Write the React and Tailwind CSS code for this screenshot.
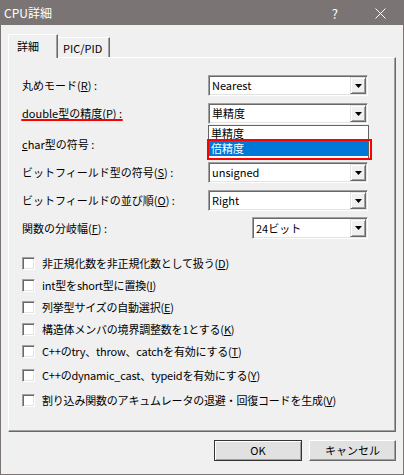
import React from "react";

function Combo({ value, className = "w-[160px]" }) {
  return (
    <div
      className={`flex h-[21px] bg-white border border-t-[#a0a0a0] border-l-[#a0a0a0] border-r-white border-b-white shadow-[inset_1px_1px_0_#696969,inset_-1px_-1px_0_#e3e3e3] ${className}`}
    >
      <div className="flex-1 flex items-center pl-[3px] text-[11px] leading-none text-black">{value}</div>
      <div className="w-[16px] my-[1px] mr-[1px] bg-[#f0f0f0] border border-t-[#e3e3e3] border-l-[#e3e3e3] border-r-[#696969] border-b-[#696969] shadow-[inset_1px_1px_0_#ffffff,inset_-1px_-1px_0_#a0a0a0] flex items-center justify-center">
        <svg width="7" height="4" viewBox="0 0 7 4">
          <path d="M0 0h7L3.5 4z" fill="#000" />
        </svg>
      </div>
    </div>
  );
}

function Row({ label, children, className = "" }) {
  return (
    <div className={`flex items-center h-[21px] ${className}`}>
      <div className="w-[186px] text-[11px] leading-none text-black">{label}</div>
      {children}
    </div>
  );
}

function Check({ children, className = "" }) {
  return (
    <div className={`flex items-center h-[16px] ${className}`}>
      <div className="w-[13px] h-[13px] bg-white border border-t-[#a0a0a0] border-l-[#a0a0a0] border-r-white border-b-white shadow-[inset_1px_1px_0_#696969,inset_-1px_-1px_0_#e3e3e3]" />
      <span className="ml-[7px] text-[11px] leading-none text-black tracking-[-0.2px]">{children}</span>
    </div>
  );
}

export default function App() {
  return (
    <div className="w-[404px] h-[475px] bg-[#f0f0f0] border border-[#7a7574] flex flex-col font-['Noto_Sans_CJK_JP',sans-serif] select-none">
      {/* タイトルバー */}
      <div className="h-[24px] bg-[#7a7574] flex items-center text-white text-[12px] leading-none">
        <span className="pl-[3px]">CPU詳細</span>
        <span className="ml-auto mr-[37px] text-[13px]">?</span>
        <svg width="11" height="11" viewBox="0 0 11 11" className="mr-[17px]">
          <path d="M0.5 0.5l10 10M10.5 0.5l-10 10" stroke="#fff" strokeWidth="1" />
        </svg>
      </div>

      {/* タブ */}
      <div className="flex items-end h-[23px] mt-[9px] ml-[7px]">
        <div className="relative z-10 h-[24px] w-[50px] -mb-px bg-[#f0f0f0] border-t border-l border-white border-r border-r-[#696969] shadow-[inset_-1px_0_0_#a0a0a0] pl-[8px] pt-[6px] text-[11px] leading-none text-black">
          詳細
        </div>
        <div className="h-[20px] w-[52px] bg-[#f0f0f0] border-t border-white border-r border-r-[#696969] shadow-[inset_-1px_0_0_#a0a0a0] pl-[5px] pt-[5px] text-[11px] leading-none text-black">
          PIC/PID
        </div>
      </div>

      {/* パネル */}
      <div className="relative ml-[7px] w-[388px] h-[375px] border border-t-white border-l-white border-r-[#696969] border-b-[#696969] shadow-[inset_-1px_-1px_0_#a0a0a0] pl-[13px] pt-[17px]">
        <Row label={<>丸めモード(<u>R</u>) :</>}>
          <Combo value="Nearest" />
        </Row>
        <Row className="mt-[7px]" label={<span className="relative">double型の精度(P) :<span className="absolute -left-px -right-px top-[14px] h-[2px] bg-[#ff0000] rounded-full" /></span>}>
          <Combo value="単精度" />
        </Row>
        <Row className="mt-[10px]" label={<><u>c</u>har型の符号 :</>}>
          <Combo value="" />
        </Row>
        <Row className="mt-[7px]" label={<>ビットフィールド型の符号(<u>S</u>) :</>}>
          <Combo value="unsigned" />
        </Row>
        <Row className="mt-[7px]" label={<>ビットフィールドの並び順(<u>O</u>) :</>}>
          <Combo value="Right" />
        </Row>
        <Row className="mt-[6px] h-[22px]" label={<>関数の分岐幅(<u>F</u>) :</>}>
          <Combo value="24ビット" className="w-[116px] ml-[44px] h-[22px]" />
        </Row>

        <Check className="mt-[16px]">非正規化数を非正規化数として扱う(<u>D</u>)</Check>
        <Check className="mt-[6px]">int型をshort型に置換(<u>I</u>)</Check>
        <Check className="mt-[6px]">列挙型サイズの自動選択(<u>E</u>)</Check>
        <Check className="mt-[6px]">構造体メンバの境界調整数を1とする(<u>K</u>)</Check>
        <Check className="mt-[6px]">C++のtry、throw、catchを有効にする(<u>T</u>)</Check>
        <Check className="mt-[8px]">C++のdynamic_cast、typeidを有効にする(<u>Y</u>)</Check>
        <Check className="mt-[9px]">割り込み関数のアキュムレータの退避・回復コードを生成(<u>V</u>)</Check>

        {/* ドロップダウンリスト */}
        <div className="absolute left-[199px] top-[67px] w-[161px] h-[34px] bg-white border border-[#646464] text-[11px] leading-none">
          <div className="h-[15px] flex items-center pl-[2px] text-black">単精度</div>
          <div className="h-[15px] flex items-center pl-[2px] bg-[#0078d7] text-white">倍精度</div>
        </div>
        <div className="absolute left-[198px] top-[81px] w-[165px] h-[21px] border-2 border-[#ff0000]" />
      </div>

      {/* ボタン */}
      <div className="flex justify-end gap-[7px] mt-[8px] mr-[7px]">
        <button className="w-[88px] h-[21px] bg-[#e1e1e1] border border-[#333333] shadow-[inset_1px_1px_0_#ffffff,inset_-1px_-1px_0_#a0a0a0] text-[11px] leading-none text-black">
          OK
        </button>
        <button className="w-[87px] h-[21px] bg-[#e1e1e1] border border-t-white border-l-white border-r-[#696969] border-b-[#696969] shadow-[inset_-1px_-1px_0_#a0a0a0] text-[11px] leading-none text-black">
          キャンセル
        </button>
      </div>
    </div>
  );
}
